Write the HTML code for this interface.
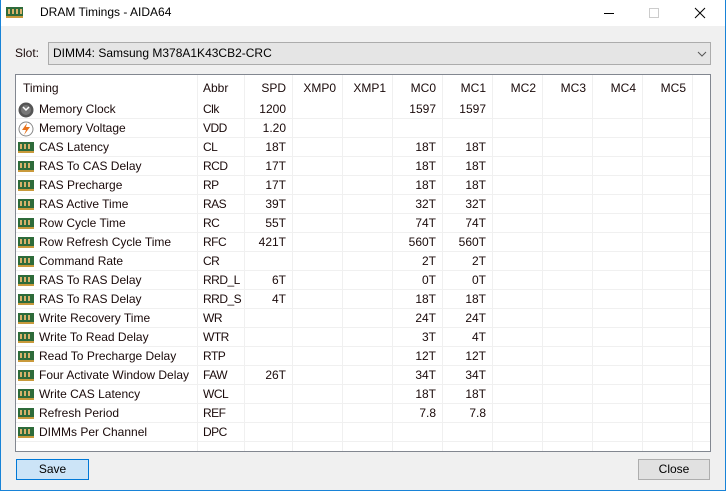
<!DOCTYPE html>
<html><head><meta charset="utf-8"><style>
*{margin:0;padding:0;box-sizing:border-box}
body{width:726px;height:491px;background:#f0f0f0;font-family:"Liberation Sans",sans-serif;font-size:12px;color:#1a0a0a;position:relative;overflow:hidden}
.frame{position:absolute;left:0;top:0;width:726px;height:491px;border:1px solid #1883d7;border-top:none}
.title{position:absolute;left:1px;top:0;width:724px;height:26px;background:#fff}
.title span{position:absolute;left:39px;top:5px;font-size:12px;color:#000}
.abs{position:absolute}
.list{position:absolute;left:15px;top:74px;width:696px;height:378px;border:1px solid #828790;background:#fff;overflow:hidden}
.vl{position:absolute;top:0;width:1px;height:376px;background:#f0f0f0}
.hl{position:absolute;left:0;width:694px;height:1px;background:#f0f0f0}
.c{position:absolute;white-space:nowrap;line-height:19px;height:19px}
.r{text-align:right}
.ab{letter-spacing:-0.5px}
.btn{position:absolute;height:21px;border:1px solid #adadad;background:#e1e1e1;text-align:center;line-height:19px;color:#000}
</style></head><body>
<div class="frame"></div>
<div class="title">
<svg class="abs" style="left:5px;top:7px" width="17" height="11"><rect x="0" y="0" width="17" height="9" fill="#2e6b3a"/><rect x="2" y="2" width="2" height="5" fill="#d8b26a"/><rect x="6" y="2" width="2" height="5" fill="#d8b26a"/><rect x="10" y="2" width="2" height="5" fill="#d8b26a"/><rect x="14" y="2" width="2" height="5" fill="#d8b26a"/><rect x="0" y="9" width="17" height="2" fill="#c99a3c"/></svg>
<span>DRAM Timings - AIDA64</span>
<div class="abs" style="left:603px;top:13px;width:10px;height:1px;background:#000"></div>
<div class="abs" style="left:648px;top:8px;width:10px;height:10px;border:1px solid #ccc"></div>
<svg class="abs" style="left:693px;top:7px" width="12" height="12"><path d="M1 1L11 11M11 1L1 11" stroke="#000" stroke-width="1"/></svg>
</div>
<div class="abs" style="left:15px;top:46px">Slot:</div>
<div class="abs" style="left:48px;top:42px;width:663px;height:23px;border:1px solid #acacac;background:#e5e5e5;padding:3px 0 0 4px;color:#000">DIMM4: Samsung M378A1K43CB2-CRC
<svg class="abs" style="left:648px;top:8px" width="10" height="6"><path d="M1 1L5 5L9 1" stroke="#555" fill="none"/></svg></div>
<div class="list" id="L"></div>
<div class="btn" style="left:16px;top:459px;width:73px;border-color:#0078d7;background:#cce4f7">Save</div>
<div class="btn" style="left:638px;top:459px;width:72px">Close</div>
<script>
var L=document.getElementById('L');
var lines=[181,228,276,326,376,426,476,526,576,626,676];
var h='';
lines.forEach(function(x){h+='<div class="vl" style="left:'+x+'px"></div>'});
for(var i=0;i<19;i++){h+='<div class="hl" style="top:'+(43+19*i)+'px"></div>'}
var hd=['SPD','XMP0','XMP1','MC0','MC1','MC2','MC3','MC4','MC5'];
h+='<div class="c" style="left:7px;top:4px">Timing</div><div class="c" style="left:187px;top:4px">Abbr</div>';
hd.forEach(function(t,k){h+='<div class="c r" style="left:'+(lines[k+2]-60)+'px;width:54px;top:4px">'+t+'</div>'});
var rows=[["Memory Clock","Clk","1200","","","1597","1597"],["Memory Voltage","VDD","1.20"],["CAS Latency","CL","18T","","","18T","18T"],["RAS To CAS Delay","RCD","17T","","","18T","18T"],["RAS Precharge","RP","17T","","","18T","18T"],["RAS Active Time","RAS","39T","","","32T","32T"],["Row Cycle Time","RC","55T","","","74T","74T"],["Row Refresh Cycle Time","RFC","421T","","","560T","560T"],["Command Rate","CR","","","","2T","2T"],["RAS To RAS Delay","RRD_L","6T","","","0T","0T"],["RAS To RAS Delay","RRD_S","4T","","","18T","18T"],["Write Recovery Time","WR","","","","24T","24T"],["Write To Read Delay","WTR","","","","3T","4T"],["Read To Precharge Delay","RTP","","","","12T","12T"],["Four Activate Window Delay","FAW","26T","","","34T","34T"],["Write CAS Latency","WCL","","","","18T","18T"],["Refresh Period","REF","","","","7.8","7.8"],["DIMMs Per Channel","DPC"]];
var ram='<svg width="16" height="11" style="position:absolute;left:2px;top:4px"><rect x="0" y="0" width="16" height="9" fill="#2e6b3a"/><rect x="2" y="2" width="2" height="5" fill="#d8b26a"/><rect x="6" y="2" width="2" height="5" fill="#d8b26a"/><rect x="10" y="2" width="2" height="5" fill="#d8b26a"/><rect x="0" y="9" width="16" height="2" fill="#c99a3c"/></svg>';
var clk='<svg width="16" height="16" style="position:absolute;left:2px;top:2px"><circle cx="8" cy="8" r="7.5" fill="#555"/><circle cx="8" cy="8" r="5" fill="#777"/><path d="M5 5L8 8L11 5" stroke="#fff" stroke-width="1.5" fill="none"/></svg>';
var volt='<svg width="16" height="16" style="position:absolute;left:2px;top:2px"><circle cx="8" cy="8" r="7" fill="#fff" stroke="#888"/><path d="M9 2L4 9H8L6 14L12 6H8Z" fill="#e8731c"/></svg>';
rows.forEach(function(r,i){var t=25+19*i;var ic=i==0?clk:(i==1?volt:ram);
h+='<div class="c" style="left:0;top:'+t+'px;width:180px">'+ic+'<span style="position:absolute;left:23px">'+r[0]+'</span></div>';
h+='<div class="c ab" style="left:187px;top:'+t+'px">'+r[1]+'</div>';
for(var k=2;k<r.length;k++){if(r[k])h+='<div class="c r" style="left:'+(lines[k]-60)+'px;width:54px;top:'+t+'px">'+r[k]+'</div>'}
});
L.innerHTML=h;
</script>
</body></html>
